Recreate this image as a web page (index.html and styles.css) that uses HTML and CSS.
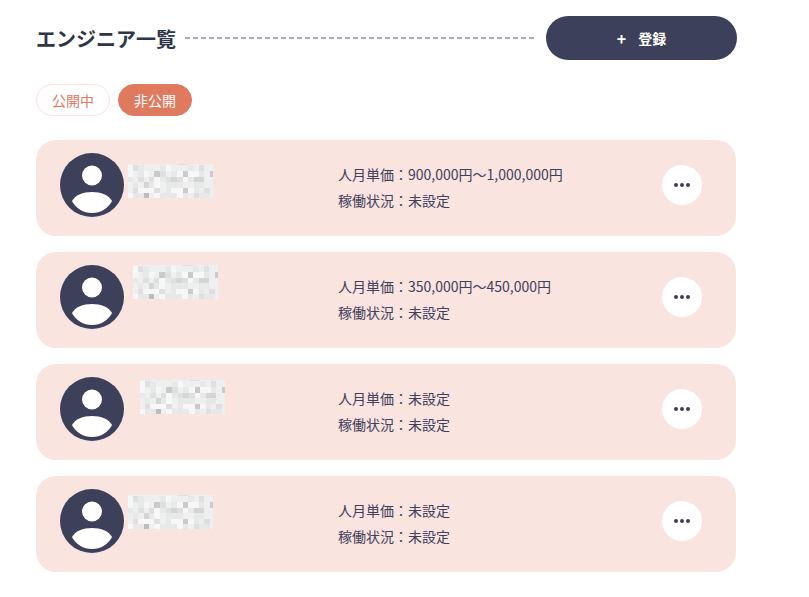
FILE: index.html
```html
<!DOCTYPE html>
<html lang="ja">
<head>
    <meta charset="UTF-8">
    <meta name="viewport" content="width=device-width, initial-scale=1.0">
    <title>エンジニア一覧</title>
    <link rel="stylesheet" href="styles.css">
</head>
<body>

    <svg class="symbols" aria-hidden="true">
        <symbol id="user" viewBox="0 0 64 64">
            <circle cx="32" cy="32" r="32" fill="#3d405b"/>
            <circle cx="32" cy="22.5" r="10" fill="#fff"/>
            <path d="M12 48C15 42 23 39 32 39S49 42 52 48C48 55.5 41 60 32 60S16 55.5 12 48Z" fill="#fff"/>
        </symbol>
        <symbol id="dots" viewBox="0 0 16 4">
            <circle cx="2" cy="2" r="2"/>
            <circle cx="8" cy="2" r="2"/>
            <circle cx="14" cy="2" r="2"/>
        </symbol>
        <!-- masked name -->
        <symbol id="mask" viewBox="0 0 85 34" shape-rendering="crispEdges">
            <rect width="85" height="34" fill="#efefef"/>
            <path fill="#e7e8e8" d="M10 1h6v6h-6zM32 1h6v6h-6zM60 1h6v6h-6zM10 7h6v6h-6zM43 7h6v6h-6zM71 7h5v6h-5zM0 13h5v5h-5zM32 13h6v5h-6zM60 13h6v5h-6zM5 18h5v6h-5zM21 18h5v6h-5zM38 18h17v6h-17zM66 18h10v6h-10zM38 24h5v5h-5zM66 24h5v5h-5zM5 29h11v5h-11zM32 29h17v5h-17zM55 29h5v5h-5zM71 29h11v5h-11z"/>
            <path fill="#dddfe0" d="M5 1h5v6h-5zM71 1h5v6h-5zM49 0h11v1h-11zM32 7h6v6h-6zM10 13h6v5h-6zM21 13h5v5h-5zM38 13h5v5h-5zM49 13h6v5h-6zM5 24h5v5h-5zM26 24h6v5h-6zM76 24h6v5h-6zM66 29h5v5h-5z"/>
            <path fill="#d3d5d6" d="M43 13h6v5h-6zM66 13h10v5h-10zM16 18h5v6h-5z"/>
            <path fill="#c9cbcb" d="M26 7h6v6h-6zM55 7h5v6h-5zM82 7h3v6h-3zM55 24h5v5h-5z"/>
            <path fill="#bcbdbd" d="M16 29h5v5h-5z"/>
            <path fill="#f7f7f7" d="M0 1h5v6h-5zM38 1h5v6h-5zM0 7h5v6h-5zM16 7h5v6h-5zM49 7h6v6h-6zM60 7h11v6h-11zM26 13h6v5h-6zM55 13h5v5h-5zM26 18h6v6h-6zM10 24h16v5h-16zM43 24h12v5h-12zM60 24h6v5h-6zM0 29h5v5h-5zM26 29h6v5h-6zM49 29h6v5h-6z"/>
        </symbol>
    </svg>

    <main class="page">
        <header class="header">
            <h1 class="title">エンジニア一覧</h1>
            <span class="line"></span>
            <button type="button" class="add"><span>+</span>登録</button>
        </header>

        <nav class="tabs">
            <button type="button" class="tab">公開中</button>
            <button type="button" class="tab active">非公開</button>
        </nav>

        <ul class="list">
            <li class="card">
                <svg class="avatar" role="img" aria-label="ユーザー"><use href="#user"/></svg>
                <svg class="name" aria-hidden="true"><use href="#mask"/></svg>
                <div class="info">
                    <p>人月単価：900,000円〜1,000,000円</p>
                    <p>稼働状況：未設定</p>
                </div>
                <button type="button" class="more" aria-label="メニュー"><svg><use href="#dots"/></svg></button>
            </li>
            <li class="card">
                <svg class="avatar" role="img" aria-label="ユーザー"><use href="#user"/></svg>
                <svg class="name name-second" aria-hidden="true"><use href="#mask"/></svg>
                <div class="info">
                    <p>人月単価：350,000円〜450,000円</p>
                    <p>稼働状況：未設定</p>
                </div>
                <button type="button" class="more" aria-label="メニュー"><svg><use href="#dots"/></svg></button>
            </li>
            <li class="card">
                <svg class="avatar" role="img" aria-label="ユーザー"><use href="#user"/></svg>
                <svg class="name name-third" aria-hidden="true"><use href="#mask"/></svg>
                <div class="info">
                    <p>人月単価：未設定</p>
                    <p>稼働状況：未設定</p>
                </div>
                <button type="button" class="more" aria-label="メニュー"><svg><use href="#dots"/></svg></button>
            </li>
            <li class="card">
                <svg class="avatar" role="img" aria-label="ユーザー"><use href="#user"/></svg>
                <svg class="name name-fourth" aria-hidden="true"><use href="#mask"/></svg>
                <div class="info">
                    <p>人月単価：未設定</p>
                    <p>稼働状況：未設定</p>
                </div>
                <button type="button" class="more" aria-label="メニュー"><svg><use href="#dots"/></svg></button>
            </li>
        </ul>
    </main>

</body>
</html>
```
FILE: styles.css
```css
* {
    box-sizing: border-box;
}

body {
    margin: 0;
    background-color: #fff;
    color: #3d405b;
    font-family: "Noto Sans CJK JP", sans-serif;
    font-size: 14px;
}

button {
    border: none;
    padding: 0;
    font: inherit;
    cursor: pointer;
}

.symbols {
    display: none;
}

.page {
    padding: 16px 73px 24px 36px;
}

.header {
    display: flex;
    align-items: center;
    gap: 9px;
}

.title {
    margin: 0;
    padding-top: 2px;
    color: #2d3748;
    font-size: 20px;
    line-height: 28px;
}

.line {
    flex: 1;
    height: 2px;
    background: repeating-linear-gradient(to right, #aeacbb 0 5px, transparent 5px 8px);
}

.add {
    display: flex;
    align-items: center;
    justify-content: center;
    gap: 12px;
    width: 191px;
    height: 44px;
    margin-right: -1px;
    border-radius: 22px;
    background-color: #3d405b;
    color: #fff;
    font-weight: bold;
}

.add span {
    font-size: 16px;
}

.tabs {
    display: flex;
    gap: 8px;
    margin: 24px 0;
}

.tab {
    height: 32px;
    padding: 0 15px;
    border: 1px solid #f9e4df;
    border-radius: 16px;
    background-color: #fff;
    color: #e07a5f;
}

.tab.active {
    border-color: #e07a5f;
    background-color: #e07a5f;
    color: #fff;
}

.list {
    display: grid;
    gap: 16px;
    margin: 0;
    padding: 0;
    list-style: none;
}

.card {
    display: grid;
    grid-template-columns: 64px 214px 1fr 40px;
    align-items: center;
    height: 96px;
    padding: 0 34px 0 24px;
    border-radius: 20px;
    background-color: #f9e4df;
}

.avatar {
    width: 64px;
    height: 64px;
    margin-top: -6px;
}

.name {
    align-self: start;
    width: 85px;
    height: 34px;
    margin: 24px 0 0 4px;
}

.name-second {
    margin: 13px 0 0 9px;
}

.name-third {
    margin: 16px 0 0 16px;
}

.name-fourth {
    margin-top: 19px;
}

.info {
    padding-bottom: 2px;
}

.info p {
    margin: 0;
    line-height: 26px;
}

.more {
    display: flex;
    align-items: center;
    justify-content: center;
    width: 40px;
    height: 40px;
    margin-top: -6px;
    border-radius: 50%;
    background-color: #fff;
}

.more svg {
    width: 16px;
    height: 4px;
    fill: #3d405b;
}
```
